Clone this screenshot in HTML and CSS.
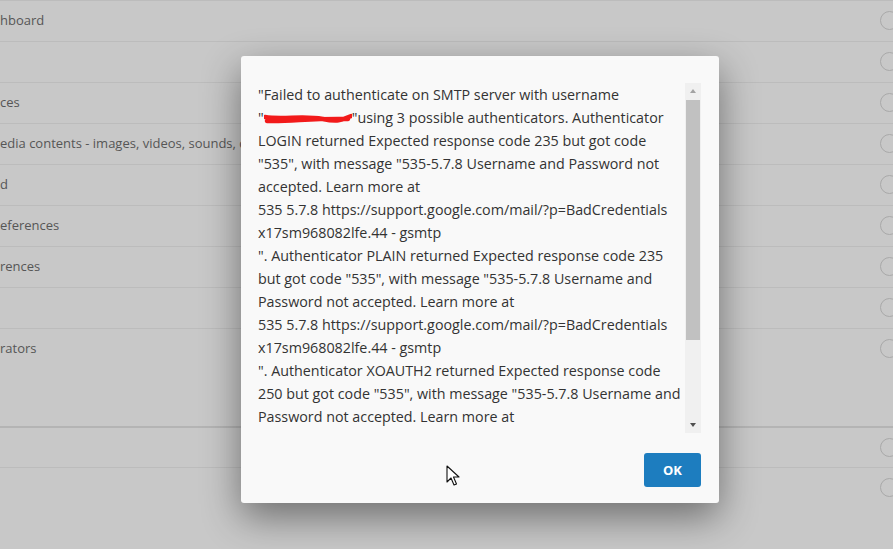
FILE: index.html
```
<!DOCTYPE html>
<html>
	<head>
		<meta charset="UTF-8">
		<title>Settings</title>
		<link rel="stylesheet" href="styles.css">
	</head>
	<body>
		<div class="rows">
			<div class="row"><span class="label">hboard</span><span class="dot"></span></div>
			<div class="row"><span class="label"></span><span class="dot"></span></div>
			<div class="row"><span class="label">ces</span><span class="dot"></span></div>
			<div class="row"><span class="label">edia contents - images, videos, sounds, documents</span><span class="dot"></span></div>
			<div class="row"><span class="label">d</span><span class="dot"></span></div>
			<div class="row"><span class="label">eferences</span><span class="dot"></span></div>
			<div class="row"><span class="label">rences</span><span class="dot"></span></div>
			<div class="row"><span class="label"></span><span class="dot"></span></div>
			<div class="row tall"><span class="label">rators</span><span class="dot"></span></div>
			<div class="row dark"><span class="label"></span><span class="dot"></span></div>
			<div class="row"><span class="label"></span><span class="dot"></span></div>
		</div>

		<div class="modal">
			<div class="scrollbox">
				<div class="msg">
					"Failed to authenticate on SMTP server with username<br>
					"<span class="redact"><svg viewBox="0 0 90 12" width="88" height="12"><path d="M1 4 C 20 7, 40 2, 60 6 S 82 5, 89 3 M3 8 C 25 9, 50 5, 86 6" stroke="#f21a1a" stroke-width="4.5" fill="none" stroke-linecap="round"/></svg></span>"using 3 possible authenticators. Authenticator<br>
					LOGIN returned Expected response code 235 but got code<br>
					"535", with message "535-5.7.8 Username and Password not<br>
					accepted. Learn more at<br>
					535 5.7.8 https://support.google.com/mail/?p=BadCredentials<br>
					x17sm968082lfe.44 - gsmtp<br>
					". Authenticator PLAIN returned Expected response code 235<br>
					but got code "535", with message "535-5.7.8 Username and<br>
					Password not accepted. Learn more at<br>
					535 5.7.8 https://support.google.com/mail/?p=BadCredentials<br>
					x17sm968082lfe.44 - gsmtp<br>
					". Authenticator XOAUTH2 returned Expected response code<br>
					250 but got code "535", with message "535-5.7.8 Username and<br>
					Password not accepted. Learn more at
				</div>
				<div class="bar">
					<span class="arrow up"></span>
					<span class="thumb"></span>
					<span class="rest"></span>
					<span class="arrow down"></span>
				</div>
			</div>
			<div class="footer">
				<button class="ok">OK</button>
			</div>
		</div>

		<svg class="cursor" width="14" height="22" viewBox="0 0 14 22">
			<path d="M1 1 L1 17 L5 13 L8 20 L10.5 19 L7.5 12 L13 12 Z" fill="#fff" stroke="#111" stroke-width="1.1" stroke-linejoin="round"/>
		</svg>
	</body>
</html>
```

FILE: styles.css
```
body{
	margin: 0;
	background-color: #c8c8c8;
	font-family: "Open Sans", "Noto Sans", sans-serif;
	overflow: hidden;
	height: 549px;
}
.rows{
	display: flex;
	flex-direction: column;
}
.row{
	display: flex;
	justify-content: space-between;
	align-items: flex-start;
	height: 41px;
	box-sizing: border-box;
	border-top: 1px solid #bcbcbc;
}
.row.tall{
	height: 98px;
}
.row.dark{
	border-top: 2px solid #b4b4b4;
}
.label{
	line-height: 39px;
	font-size: 13px;
	color: #565656;
	white-space: nowrap;
	overflow: hidden;
	max-width: 241px;
}
.dot{
	width: 17px;
	height: 17px;
	margin-top: 10px;
	margin-right: -6px;
	border: 1px solid #a9a9a9;
	border-radius: 50%;
}

.modal{
	position: absolute;
	left: 241px;
	top: 56px;
	width: 478px;
	height: 447px;
	box-sizing: border-box;
	padding: 27px 18px 16px 17px;
	background-color: #f9f9f9;
	border-radius: 3px;
	box-shadow: 0 14px 38px rgba(0,0,0,.45);
	display: flex;
	flex-direction: column;
}
.scrollbox{
	display: flex;
	height: 350px;
}
.msg{
	flex: 1;
	overflow: hidden;
	font-size: 14.3px;
	line-height: 23px;
	color: #333;
	white-space: nowrap;
}
.redact{
	display: inline-block;
	width: 88px;
	height: 23px;
	vertical-align: top;
}
.redact svg{
	display: block;
	margin-top: 7px;
}
.bar{
	width: 16px;
	background-color: #f0f0f0;
	display: flex;
	flex-direction: column;
	align-items: center;
}
.arrow{
	height: 17px;
	width: 16px;
	position: relative;
}
.arrow::after{
	content: "";
	position: absolute;
	left: 5px;
	border-left: 3.5px solid transparent;
	border-right: 3.5px solid transparent;
}
.up::after{
	top: 6px;
	border-bottom: 4px solid #a3a3a3;
}
.down::after{
	top: 7px;
	border-top: 4px solid #505050;
}
.thumb{
	width: 14px;
	height: 240px;
	background-color: #c1c1c1;
}
.rest{
	flex: 1;
}
.footer{
	display: flex;
	justify-content: flex-end;
	margin-top: 20px;
}
.ok{
	width: 57px;
	height: 34px;
	border: 0;
	border-radius: 3px;
	background-color: #1d7dbf;
	color: #fff;
	font-family: "Open Sans", sans-serif;
	font-weight: 700;
	font-size: 13px;
}
.cursor{
	position: absolute;
	left: 446px;
	top: 465px;
}
```
